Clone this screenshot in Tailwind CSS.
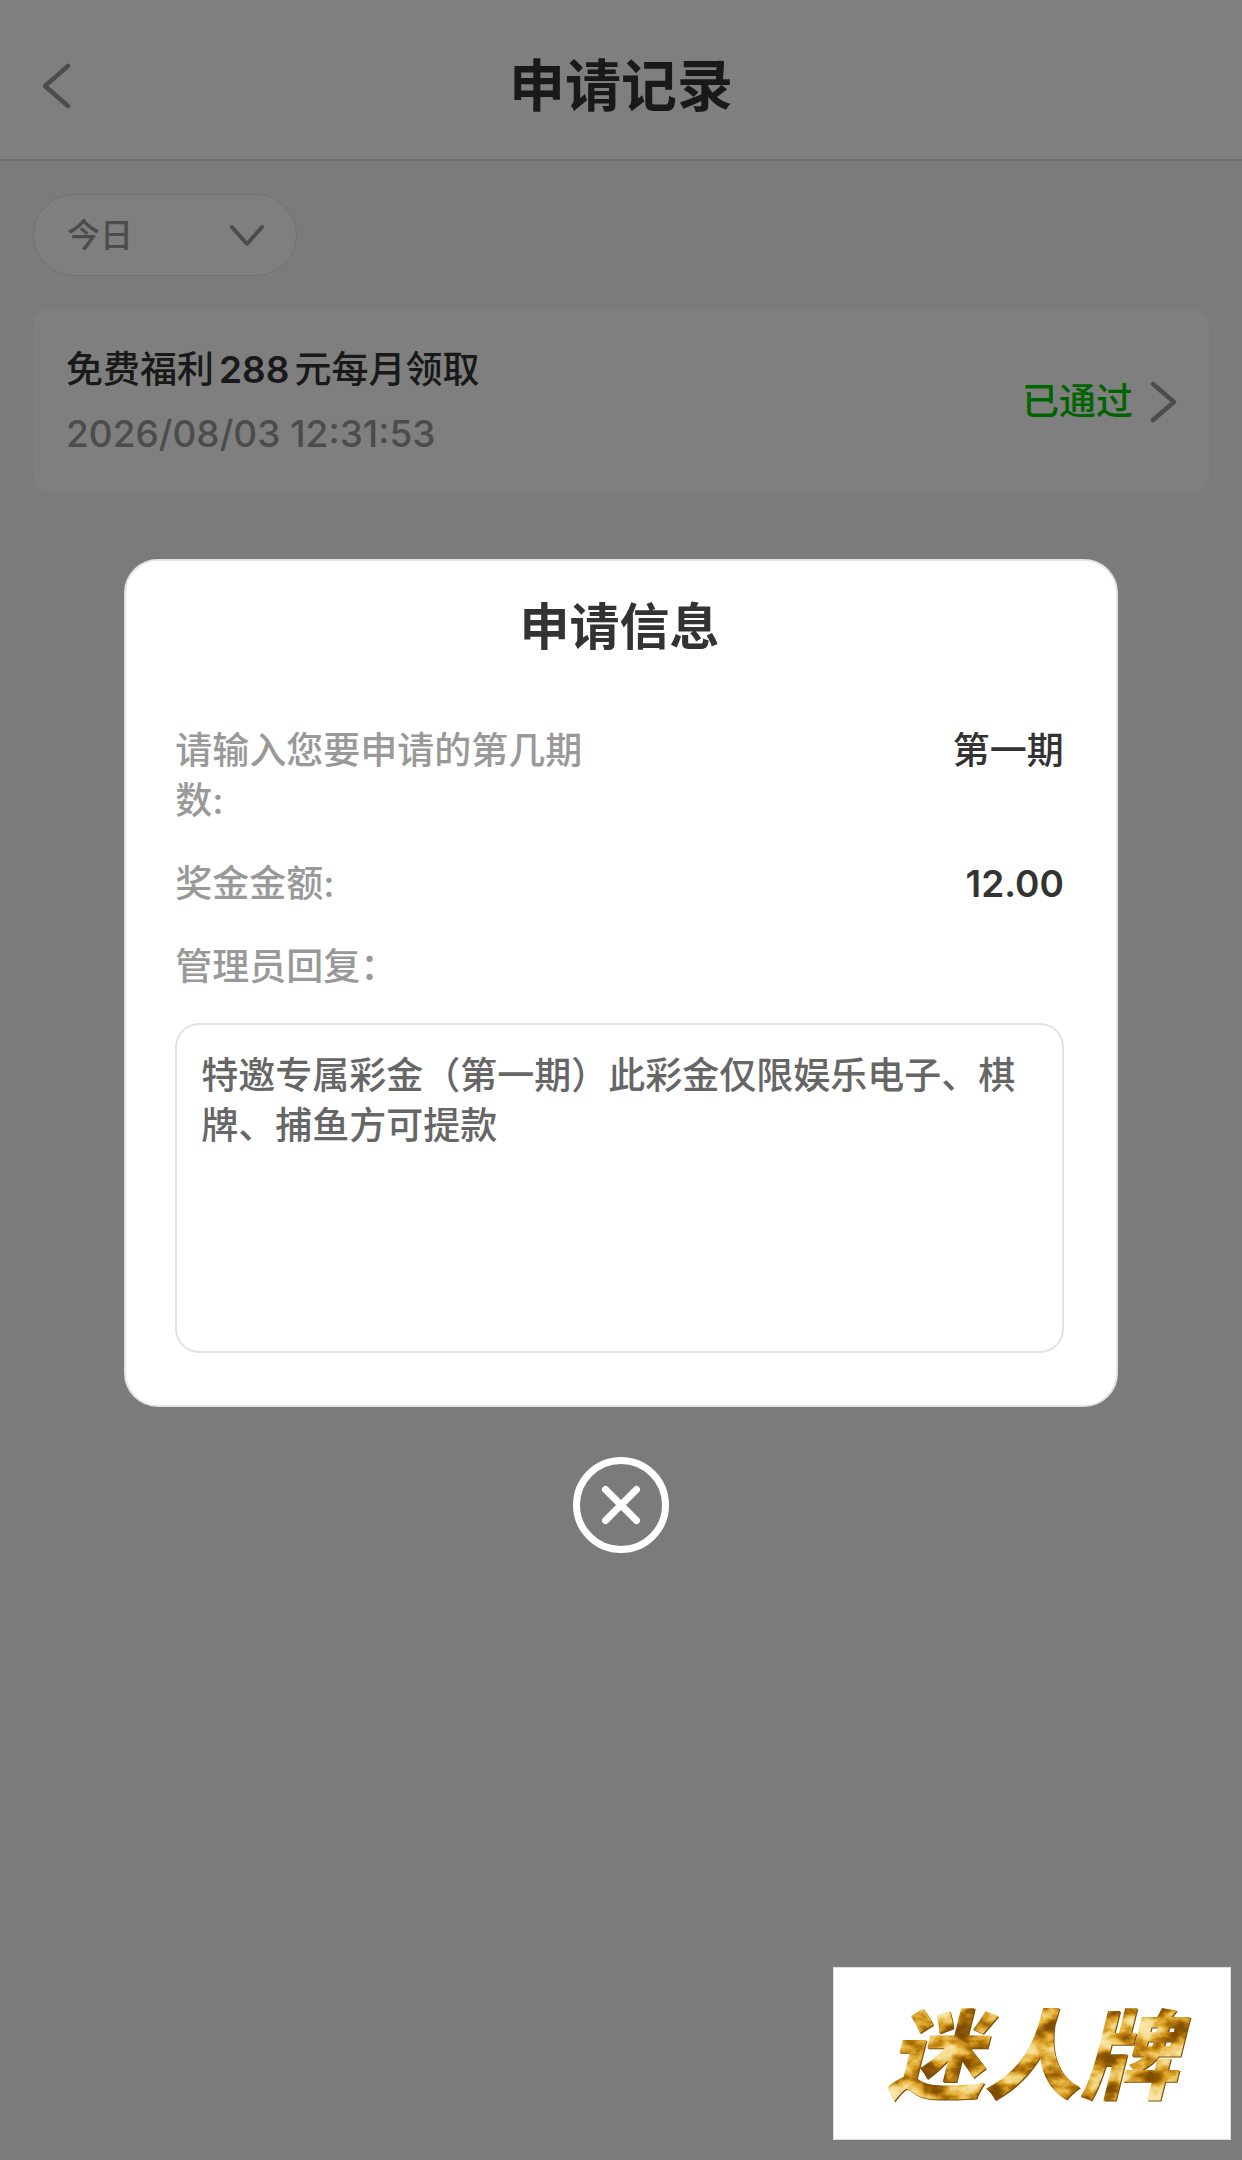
<!DOCTYPE html>
<html lang="zh-CN">
<head>
  <meta charset="UTF-8">
  <meta name="viewport" content="width=device-width, initial-scale=1.0">
  <title>申请记录</title>
  <script src="https://cdn.jsdelivr.net/npm/@tailwindcss/browser@4"></script>
</head>
<body class="min-h-screen bg-[#f6f6f6] text-[37px] leading-[50px] font-medium text-[#333] font-['Inter','Noto_Sans_CJK_SC',sans-serif]">

  <!-- Header -->
  <header class="grid grid-cols-[1fr_auto_1fr] items-center h-[161px] px-8 pt-3 bg-white border-b-2 border-[#dcdcdc]">
    <a href="#" aria-label="返回" class="justify-self-start p-2">
      <svg class="w-8 h-12" viewBox="0 0 32 48" fill="none" stroke="#999" stroke-width="4.5" stroke-linecap="round" stroke-linejoin="round">
        <path d="M28 4 L5 24 L28 44"/>
      </svg>
    </a>
    <h1 class="text-[56px] leading-[80px] font-semibold">申请记录</h1>
  </header>

  <!-- Record list -->
  <main class="flex flex-col gap-[33px] p-[33px]">
    <div class="relative w-[264px]">
      <select id="period" aria-label="日期" class="appearance-none block w-full h-[82px] pl-[33px] rounded-full border border-[#e3e3e3] bg-white text-[33px] text-[#999]">
        <option>今日</option>
      </select>
      <svg class="absolute right-8 top-[30px] w-9 h-6 pointer-events-none" viewBox="0 0 36 24" fill="none" stroke="#999" stroke-width="4" stroke-linecap="round" stroke-linejoin="round">
        <path d="M3 3 L18 20 L33 3"/>
      </svg>
    </div>

    <a href="#" class="flex items-center justify-between h-[183px] pl-[33px] pr-8 pt-0.5 rounded-2xl bg-white">
      <div class="flex flex-col gap-3.5">
        <h2>免费福利<span class="mx-[5px] font-semibold">288</span>元每月领取</h2>
        <p class="text-[#999]">2026/08/03 12:31:53</p>
      </div>
      <div class="flex items-center gap-4">
        <span class="text-[#00c800]">已通过</span>
        <svg class="w-7 h-11" viewBox="0 0 28 44" fill="none" stroke="#999" stroke-width="4.5" stroke-linecap="round" stroke-linejoin="round">
          <path d="M4 4 L25 22 L4 40"/>
        </svg>
      </div>
    </a>
  </main>

  <!-- Popup -->
  <div class="fixed inset-0 flex flex-col items-center justify-center gap-[50px] pb-12 bg-black/50">
    <section role="dialog" aria-labelledby="dialogTitle" class="w-4/5 pl-[49px] pr-[52px] pt-[31px] pb-[52px] rounded-[34px] border-2 border-[#e3e3e3] bg-white">
      <h2 id="dialogTitle" class="mb-16 text-center text-[50px] leading-[70px] font-semibold">申请信息</h2>
      <dl class="flex flex-col gap-[33px]">
        <div class="flex justify-between">
          <dt class="w-1/2 pr-5 text-[#999]">请输入您要申请的第几期数:</dt>
          <dd>第一期</dd>
        </div>
        <div class="flex justify-between">
          <dt class="text-[#999]">奖金金额:</dt>
          <dd class="font-semibold">12.00</dd>
        </div>
      </dl>
      <label for="reply" class="block mt-[33px] mb-[31px] text-[#999]">管理员回复：</label>
      <textarea id="reply" readonly class="block w-full h-[330px] px-6 py-[26px] rounded-3xl border-2 border-[#e3e3e3] resize-none text-[#666]">特邀专属彩金（第一期）此彩金仅限娱乐电子、棋牌、捕鱼方可提款</textarea>
    </section>
    <button id="closeDialog" aria-label="关闭">
      <svg class="w-24 h-24" viewBox="0 0 96 96" fill="none" stroke="#fff" stroke-width="7" stroke-linecap="round">
        <circle cx="48" cy="48" r="44.5"/>
        <path d="M32.500 32.500 L63.500 63.500 M63.500 32.500 L32.500 63.500"/>
      </svg>
    </button>
  </div>

  <!-- Brand badge -->
  <div class="fixed right-[11px] bottom-5 flex items-center justify-center w-[398px] h-[173px] pt-1 border border-[#ddd] bg-white">
    <!-- gold foil texture -->
    <svg class="absolute w-0 h-0" aria-hidden="true">
      <filter id="gold" x="-5%" y="-5%" width="110%" height="110%" color-interpolation-filters="sRGB">
        <feTurbulence type="fractalNoise" baseFrequency="0.03 0.045" numOctaves="4" seed="8"/>
        <feColorMatrix values="1.5 0 0 0 -0.25  1.5 0 0 0 -0.25  1.5 0 0 0 -0.25  0 0 0 0 1"/>
        <feComponentTransfer result="foil">
          <feFuncR type="table" tableValues="0.5 0.5 0.55 0.68 0.84 0.92 0.96 0.98 0.98"/>
          <feFuncG type="table" tableValues="0.3 0.3 0.34 0.45 0.61 0.75 0.86 0.9 0.9"/>
          <feFuncB type="table" tableValues="0 0 0.02 0.04 0.13 0.33 0.56 0.66 0.66"/>
        </feComponentTransfer>
        <feComposite in="foil" in2="SourceAlpha" operator="in" result="face"/>
        <feOffset in="SourceAlpha" dx="1" dy="1" result="shape"/>
        <feFlood flood-color="#7a500e"/>
        <feComposite in2="shape" operator="in" result="edge"/>
        <feMerge>
          <feMergeNode in="edge"/>
          <feMergeNode in="face"/>
        </feMerge>
      </filter>
    </svg>
    <span class="text-[97px] leading-[120px] font-black italic text-[#d29a2a] [filter:url(#gold)]">迷人牌</span>
  </div>

</body>
</html>
